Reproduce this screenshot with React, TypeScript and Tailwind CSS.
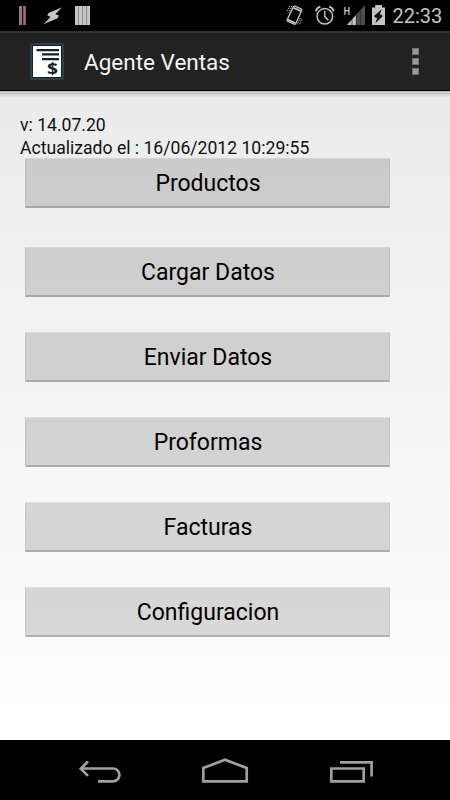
const buttons = ["Productos", "Cargar Datos", "Enviar Datos", "Proformas", "Facturas", "Configuracion"];

const StatusBar = () => {
  return (
    <div className="flex h-[31px] items-center justify-between bg-black">
      <svg width="110" height="31" viewBox="0 0 110 31">
        {/* Pause bars */}
        <path d="M19 6h3v19h-3zM23.2 6h2.6v19h-2.6z" fill="#a3707f" />
        {/* Bolt */}
        <path d="M62 7.3L48.5 13l-1.3 2.2 3.3 1.8L43.5 24.3 57.5 18.2l1.4-2.7-3.6-1.3z" fill="#c4c4c4" />
        {/* Barcode */}
        <path d="M75 6h15v19H75z" fill="#8c8c8c" />
        <path d="M75 6h3v19h-3zM79 6h3v19h-3zM83 6h3v19h-3zM87 6h3v19h-3z" fill="#c6c6c6" />
      </svg>

      <div className="flex h-[31px] items-center">
        <svg width="110" height="31" viewBox="280 0 110 31" fill="none" stroke="#c4c4c4">
          {/* Vibrate */}
          <path d="M295 6.2l6 2.6q1.2.6.7 1.8l-5.9 12.9q-.5 1.1-1.6.6l-6.3-2.7q-1.2-.6-.7-1.7l6.2-12.9q.5-1 1.6-.6z" strokeWidth="1.3" />
          <path d="M293.5 7.9l7.7 3.3M287.6 19.4l7.8 3.6" strokeWidth="1.7" />
          <path d="M291.9 6l-3.1 6.6M289.8 6l-2.4 5M300.2 18l-3 6.3M301.8 19.4l-2.2 4.8" strokeWidth="1" strokeDasharray="1.4 .7" />
          {/* Alarm */}
          <circle cx="324.8" cy="16.2" r="7.8" strokeWidth="1.5" />
          <path d="M324.8 11v5.6l3.6 3.6" strokeWidth="1.4" />
          <path d="M315.8 11.2q.8-3.4 4.6-4.6M333.8 11.2q-.8-3.4-4.6-4.6" strokeWidth="1.8" />
          {/* Signal */}
          <path d="M347 25L365 5v20z" fill="#4c4c4c" stroke="none" />
          <path d="M347 25l9-10V25z" fill="#c6c6c6" stroke="none" />
          <path d="M352 19v6M356.3 14v11M360.7 9v16" stroke="#242424" strokeWidth=".7" />
          <text x="343.4" y="14.8" fill="#c4c4c4" stroke="none" className="font-['Roboto'] text-[11px] font-medium" textLength="6.6" lengthAdjust="spacingAndGlyphs">H</text>
          {/* Battery */}
          <path d="M375.2 5h6.8v2.6h3V25h-13V7.6h3.2z" fill="#c4c4c4" stroke="none" />
          <path d="M381.8 9.3l-7.6 6.4.5 1.6 2.4.6-1.8 5.3 7.2-6.6-.4-1.7-2.3-.6z" fill="#151515" stroke="none" />
        </svg>
        <span className="w-[60px] pt-[2px] pl-[2.5px] text-[20px] leading-[31px] text-[#c4c4c4]">22:33</span>
      </div>
    </div>
  );
};

const ActionBar = () => {
  return (
    <div className="flex h-[60px] items-center border-t-2 border-b border-t-[#303030] border-b-black bg-[#222222] pl-[30px]">
      <svg width="34" height="37" viewBox="0 0 34 37">
        <rect width="34" height="37" rx="2" fill="#303e48" />
        <rect x="2" y="2" width="30" height="33" fill="#10202e" />
        <rect x="3" y="3" width="28" height="31" fill="#fff" />
        <path d="M6.5 6H29v2.2H6.5zM12 10.3h17v2.2H12zM12 15h17v2.2H12z" fill="#14222e" />
        <text x="17" y="31.2" fill="#14222e" className="font-['Noto_Sans'] text-[16px] font-bold" textLength="11" lengthAdjust="spacingAndGlyphs">$</text>
      </svg>
      <h1 className="ml-5 flex-1 pt-[3px] text-[22.5px] text-[#f3f3f3]">Agente Ventas</h1>
      <div className="mr-[31px] flex flex-col gap-[3px]">
        <div className="size-[7px] border border-[#707070] bg-[#999]"></div>
        <div className="size-[7px] border border-[#707070] bg-[#999]"></div>
        <div className="size-[7px] border border-[#707070] bg-[#999]"></div>
      </div>
    </div>
  );
};

const NavBar = () => {
  return (
    <div className="h-[60px] bg-black">
      <svg width="450" height="60" viewBox="0 740 450 60" fill="none" stroke="#a0a0a0" strokeWidth="2.7">
        {/* Back */}
        <path d="M88 761.5l-7.2 7.2 7.2 7.2M80.5 768.5h32.5a6.3 6.3 0 0 1 0 12.8H98" />
        {/* Home */}
        <path d="M203.3 781.3v-13.3L225 759.8l21.7 8.2v13.3z" />
        {/* Recents */}
        <path d="M331.3 768.5h32.4v12.8h-32.4zM340 762.4h31.6v14.2" />
      </svg>
    </div>
  );
};

const App = () => {
  return (
    <div className="flex h-[800px] w-[450px] flex-col overflow-hidden font-['Roboto',sans-serif]">
      <StatusBar />
      <ActionBar />

      <main className="flex-1 bg-linear-to-b from-[#ebebeb] to-white">
        <div className="h-[7px] bg-linear-to-b from-black/20 to-transparent"></div>
        <div className="pt-[16px] pl-5 text-[17.6px] leading-[23px] text-[#111]">
          <p>v: 14.07.20</p>
          <p>Actualizado el : 16/06/2012 10:29:55</p>
        </div>

        <div className="-mt-[2px] flex flex-col gap-[35px] pl-[25px]">
          {buttons.map((label) => (
            <button
              key={label}
              className="h-[50px] w-[365px] rounded-[1px] border border-b-2 border-t-black/10 border-r-black/20 border-b-black/30 border-l-black/20 bg-black/14 bg-clip-padding pt-1 pl-px text-[23px] text-black first:mb-1"
            >
              {label}
            </button>
          ))}
        </div>
      </main>

      <NavBar />
    </div>
  );
};

export default App;
